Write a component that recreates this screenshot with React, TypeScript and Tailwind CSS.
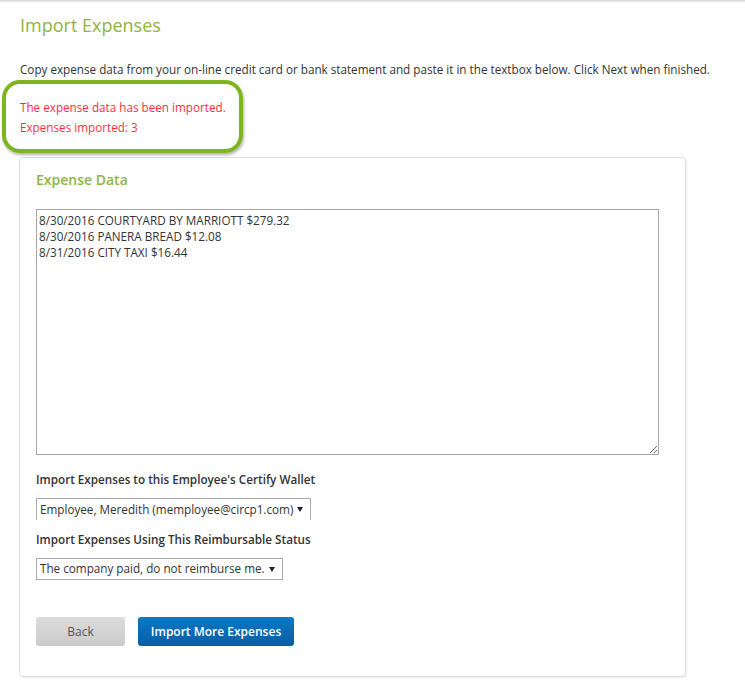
import React from 'react';

const font = { fontFamily: '"Open Sans", "Noto Sans", Arial, sans-serif' };

const expenseText = `8/30/2016 COURTYARD BY MARRIOTT $279.32
8/30/2016 PANERA BREAD $12.08
8/31/2016 CITY TAXI $16.44`;

function FakeSelect({ value, width, noBottom }: { value: string; width: string; noBottom?: boolean }) {
  return (
    <div
      className={`flex items-center h-[22px] border border-[#a9a9a9] bg-white pl-[3px] pr-[7px] text-[11.7px] text-[#333] ${width} ${noBottom ? 'border-b-0' : ''}`}
    >
      <span className="flex-1 whitespace-nowrap">{value}</span>
      <span className="ml-1 w-0 h-0 border-l-[3px] border-r-[3px] border-t-[5px] border-l-transparent border-r-transparent border-t-[#222]" />
    </div>
  );
}

export default function App() {
  return (
    <div className="relative w-[745px] h-[682px] bg-white overflow-hidden" style={font}>
      <div className="h-[3px] bg-gradient-to-b from-[#d6d6d6] to-white" />

      <div className="px-5">
        <h1 className="mt-[9px] text-[18px] leading-[26px] font-normal text-[#8fb440]">Import Expenses</h1>

        <p className="mt-[23px] text-[11.7px] leading-[16px] text-[#333] whitespace-nowrap">
          Copy expense data from your on-line credit card or bank statement and paste it in the textbox below. Click Next when finished.
        </p>

        <div className="mt-[20px] text-[11.7px] leading-[20px] text-[#ff2f3d]">
          <div>The expense data has been imported.</div>
          <div>Expenses imported: 3</div>
        </div>
      </div>

      <div className="absolute left-[2px] top-[80px] w-[241px] h-[73px] rounded-[18px] border-[4px] border-[#7fb421] shadow-[1px_2px_3px_rgba(0,0,0,0.3)]" />

      <div className="ml-[19px] mt-[20px] w-[667px] h-[520px] border border-[#dedede] rounded-[4px] shadow-[1px_1px_2px_rgba(0,0,0,0.08)] px-4 pt-[12px]">
        <h2 className="text-[14px] leading-[20px] font-semibold text-[#8fb440]">Expense Data</h2>

        <textarea
          readOnly
          value={expenseText}
          className="mt-[19px] block w-[623px] h-[246px] border border-[#a6a6a6] px-[2px] pt-[2px] text-[11.7px] leading-[16px] text-[#333] resize-y outline-none"
          style={font}
        />

        <div className="mt-[15px] text-[11.7px] leading-[18px] font-semibold text-[#333]">
          Import Expenses to this Employee's Certify Wallet
        </div>
        <div className="mt-[10px]">
          <FakeSelect value="Employee, Meredith (memployee@circp1.com)" width="w-[275px]" noBottom />
        </div>

        <div className="mt-[10px] text-[11.7px] leading-[18px] font-semibold text-[#333]">
          Import Expenses Using This Reimbursable Status
        </div>
        <div className="mt-[10px]">
          <FakeSelect value="The company paid, do not reimburse me." width="w-[247px]" />
        </div>

        <div className="mt-[37px] flex gap-[13px]">
          <button className="w-[89px] h-[29px] rounded-[3px] bg-gradient-to-b from-[#dcdcdc] to-[#cbcbcb] text-[12px] text-[#555]">
            Back
          </button>
          <button className="w-[156px] h-[29px] rounded-[3px] bg-gradient-to-b from-[#0d78c4] to-[#075ea6] text-[12px] font-semibold text-white">
            Import More Expenses
          </button>
        </div>
      </div>
    </div>
  );
}
